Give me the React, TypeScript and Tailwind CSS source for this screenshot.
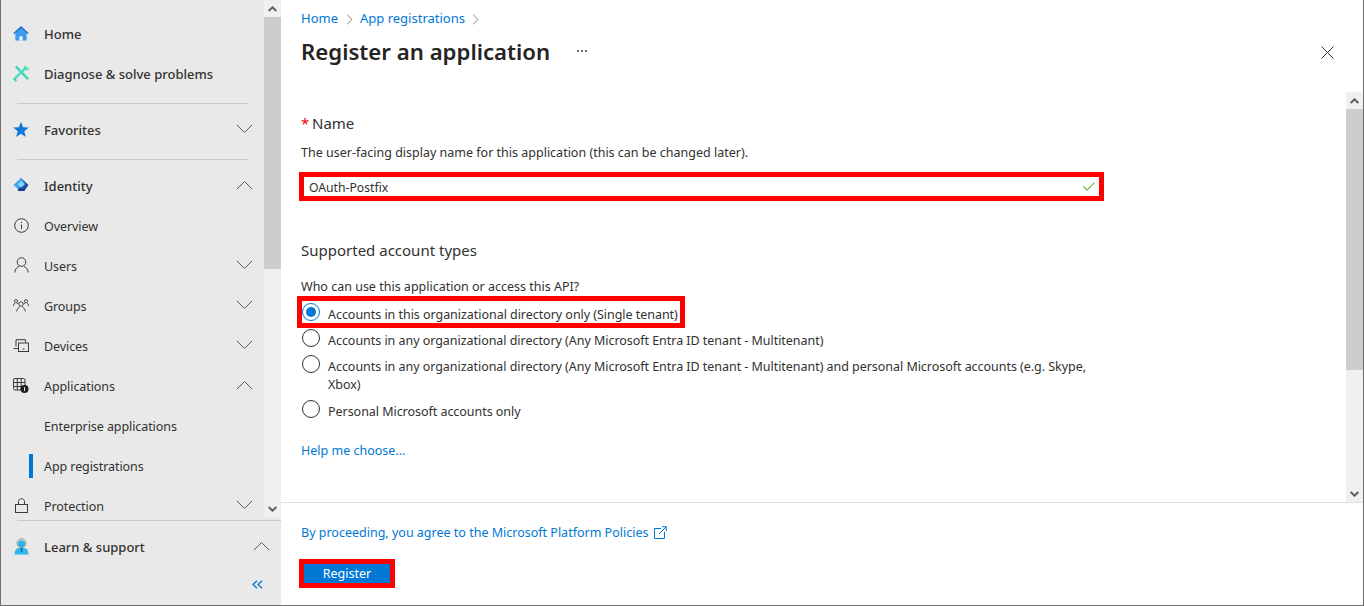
import React from "react";

const ChevronDown = ({ className = "" }: { className?: string }) => (
  <svg width="17" height="10" viewBox="0 0 17 10" fill="none" stroke="#5a5a5a" strokeWidth="1" className={className}>
    <path d="M0.8 0.8 L8.5 8.5 L16.2 0.8" />
  </svg>
);
const ChevronUp = ({ className = "" }: { className?: string }) => (
  <svg width="17" height="10" viewBox="0 0 17 10" fill="none" stroke="#5a5a5a" strokeWidth="1" className={className}>
    <path d="M0.8 9.2 L8.5 1.5 L16.2 9.2" />
  </svg>
);

const ScrollArrow = ({ up }: { up?: boolean }) => (
  <svg width="9" height="6" viewBox="0 0 9 6" fill="none" stroke="#5f5f5f" strokeWidth="2">
    {up ? <path d="M0.7 5 L4.5 1.3 L8.3 5" /> : <path d="M0.7 1 L4.5 4.7 L8.3 1" />}
  </svg>
);

const Home = () => (
  <svg width="17" height="17" viewBox="0 0 17 17">
    <path d="M2.5 7.5 L8.5 2 L14.5 7.5 V16 H2.5Z" fill="#3f9bee" />
    <rect x="6.8" y="11.5" width="3.4" height="4.5" fill="#f4f8fc" />
    <path d="M8.5 0.5 L16.8 8.2 L15.6 9 L8.5 2.6 L1.4 9 L0.2 8.2Z" fill="#1d6cc4" />
  </svg>
);
const Tools = () => (
  <svg width="17" height="17" viewBox="0 0 17 17" fill="none">
    <path d="M3 1 L16 14.5" stroke="#3fd6bb" strokeWidth="2.6" />
    <path d="M14.5 1.5 L2 14" stroke="#4fdcc3" strokeWidth="2.6" />
    <path d="M12 4.5 L13 0.5 M14 5 L16.8 2.5" stroke="#4fdcc3" strokeWidth="1.8" />
    <path d="M0.5 13.5 L3.5 16.5" stroke="#3fd6bb" strokeWidth="2.4" />
  </svg>
);
const Star = () => (
  <svg width="17" height="17" viewBox="0 0 17 17">
    <path d="M8.5 0.3 L10.7 6.2 L16.8 6.4 L12 10.3 L13.7 16.4 L8.5 12.9 L3.3 16.4 L5 10.3 L0.2 6.4 L6.3 6.2Z" fill="#0f78d6" />
  </svg>
);
const Identity = () => (
  <svg width="17" height="16" viewBox="0 0 17 16">
    <path d="M8.5 0.5 L16.5 8 L12 14.5 L5 14.5Z" fill="#1c4fa5" />
    <path d="M8.5 0.5 L0.5 8 L5 12 L13 7Z" fill="#3aa6ec" />
    <path d="M8.5 3.5 L12.5 7.5 L8.5 11 L5 7.5Z" fill="#7fd6f8" />
    <path d="M5 12 L13 12 L12 14.5 L7 14.5Z" fill="#163f8c" />
  </svg>
);
const Info = () => (
  <svg width="15" height="15" viewBox="0 0 15 15" fill="none" stroke="#3a3a3a" strokeWidth="1">
    <circle cx="7.5" cy="7.5" r="6.8" />
    <path d="M7.5 6.5 V11 M7.5 3.8 V5" />
  </svg>
);
const User = () => (
  <svg width="15" height="16" viewBox="0 0 15 16" fill="none" stroke="#3a3a3a" strokeWidth="1">
    <circle cx="7.5" cy="5" r="4.3" />
    <path d="M0.7 15.5 C1 11.5 4 9.6 5 9.4 M14.3 15.5 C14 11.5 11 9.6 10 9.4" />
  </svg>
);
const Groups = () => (
  <svg width="16" height="13" viewBox="0 0 16 13" fill="none" stroke="#3a3a3a" strokeWidth="0.9">
    <circle cx="8" cy="5" r="2.2" />
    <path d="M3.6 12.5 C4.2 9.4 6 8 7 7.6 M12.4 12.5 C11.8 9.4 10 8 9 7.6" />
    <circle cx="3" cy="2.2" r="1.6" />
    <circle cx="13" cy="2.2" r="1.6" />
    <path d="M0.3 7 C0.6 5.4 1.3 4.5 2 4 M4.2 4 L5.2 5 M15.7 7 C15.4 5.4 14.7 4.5 14 4 M11.8 4 L10.8 5" />
  </svg>
);
const Devices = () => (
  <svg width="16" height="13" viewBox="0 0 16 13" fill="none" stroke="#3a3a3a" strokeWidth="1">
    <path d="M3 7.5 V0.7 H12.5 V3.5" />
    <path d="M0.5 9.5 H5" />
    <rect x="5.5" y="4" width="10" height="8.5" />
    <path d="M9.5 10 H11.5" />
  </svg>
);
const Apps = () => (
  <svg width="16" height="15" viewBox="0 0 16 15" fill="none">
    <rect x="0.5" y="0.5" width="11.5" height="11.5" rx="1.5" stroke="#3a3a3a" />
    <path d="M0.5 4.5 H12 M0.5 8.5 H12 M4.3 0.5 V12 M8.2 0.5 V12" stroke="#3a3a3a" />
    <circle cx="11.5" cy="11" r="4" fill="#1f1f1f" />
    <path d="M11.5 9.2 V13" stroke="#e9e9e9" strokeWidth="1" />
  </svg>
);
const Lock = () => (
  <svg width="13" height="15" viewBox="0 0 13 15" fill="none" stroke="#3a3a3a" strokeWidth="1">
    <rect x="0.5" y="6.5" width="12" height="8" />
    <path d="M3.5 6.5 V3.6 C3.5 -0.3 9.5 -0.3 9.5 3.6 V6.5" />
  </svg>
);
const Support = () => (
  <svg width="15" height="17" viewBox="0 0 15 17" fill="none">
    <circle cx="7.5" cy="5.2" r="4.4" stroke="#7a7a7a" strokeWidth="0.8" />
    <circle cx="7.5" cy="5.8" r="3.5" fill="#2db4e6" />
    <path d="M0.5 16.5 C0.5 12 3 10 5 10 H10 C12 10 14.5 12 14.5 16.5Z" fill="#31b8ea" />
    <path d="M6.5 10 H8.5 L8 14 H7Z" fill="#0f5f96" />
  </svg>
);

const Row = ({
  icon,
  label,
  chevron,
  active,
  strong,
}: {
  icon?: React.ReactNode;
  label: string;
  chevron?: "up" | "down";
  active?: boolean;
  strong?: boolean;
}) => (
  <div className="flex h-10 items-center relative">
    <div className="w-[16px] h-4 ml-[12px] -mt-[2px] flex items-center justify-center shrink-0">{icon}</div>
    <span className={`ml-[15px] flex-1 pt-[2px] text-[#323130] ${strong ? "font-medium text-[13px]" : "text-[12.5px] tracking-[-0.08px]"}`}>{label}</span>
    {chevron === "down" && <ChevronDown className="mr-[11px] -mt-[2px]" />}
    {chevron === "up" && <ChevronUp className="mr-[11px] -mt-[2px]" />}
    {active && <div className="absolute left-[28px] top-[8px] w-1 h-6 bg-[#0078d4]" />}
  </div>
);

const Radio = ({ checked, children, className = "" }: { checked?: boolean; children: React.ReactNode; className?: string }) => (
  <div className={`flex items-start ${className}`}>
    <span
      className={`w-[18px] h-[18px] rounded-full border shrink-0 flex items-center justify-center ${
        checked ? "border-[#0078d4]" : "border-[#323130]"
      }`}
    >
      {checked && <span className="w-[10px] h-[10px] rounded-full bg-[#0078d4]" />}
    </span>
    <span className="ml-[8px] mt-[3px] text-[12.5px] tracking-[-0.04px] leading-[18px] text-[#323130]">{children}</span>
  </div>
);

export default function App() {
  return (
    <div className="w-[1364px] h-[606px] flex overflow-hidden bg-white border-l border-r border-b border-[#6d6d6d] [font-family:'Noto_Sans','Open_Sans',sans-serif]">
      <aside className="w-[280px] shrink-0 bg-[#e9e9e9] flex flex-col h-full">
        <div className="flex h-[517px] shrink-0">
          <nav className="w-[263px] shrink-0 overflow-hidden pt-[14px]">
            <Row icon={<Home />} label="Home" strong />
            <Row icon={<Tools />} label="Diagnose & solve problems" strong />
            <div className="h-px bg-[#c8c8c8] ml-[16px] mr-[16px] mt-[9px] mb-[6px]" />
            <Row icon={<Star />} label="Favorites" chevron="down" strong />
            <div className="h-px bg-[#c8c8c8] ml-[16px] mr-[16px] mt-[9px] mb-[6px]" />
            <Row icon={<Identity />} label="Identity" chevron="up" strong />
            <Row icon={<Info />} label="Overview" />
            <Row icon={<User />} label="Users" chevron="down" />
            <Row icon={<Groups />} label="Groups" chevron="down" />
            <Row icon={<Devices />} label="Devices" chevron="down" />
            <Row icon={<Apps />} label="Applications" chevron="up" />
            <Row label="Enterprise applications" />
            <Row label="App registrations" active />
            <Row icon={<Lock />} label="Protection" chevron="down" />
          </nav>
          <div className="w-[17px] shrink-0 bg-[#f0f0f0] flex flex-col">
            <div className="h-[17px] flex items-center justify-center"><ScrollArrow up /></div>
            <div className="h-[252px] bg-[#cdcdcd]" />
            <div className="flex-1" />
            <div className="h-[17px] flex items-center justify-center"><ScrollArrow /></div>
          </div>
        </div>
        <div className="h-px bg-[#c8c8c8] ml-[16px] mt-[3px]" />
        <div className="flex h-[52px] items-center">
          <div className="w-[16px] h-4 ml-[12px] flex items-center justify-center shrink-0 -mt-[2px]"><Support /></div>
          <span className="ml-[15px] pt-[2px] flex-1 text-[13px] font-medium text-[#323130]">Learn &amp; support</span>
          <ChevronUp className="mr-[11px] -mt-[2px]" />
        </div>
        <div className="flex justify-end pr-[18px] mt-[7px]">
          <svg width="11" height="9" viewBox="0 0 11 9" fill="none" stroke="#0078d4" strokeWidth="1.3">
            <path d="M5 0.7 L1 4.5 L5 8.3 M10 0.7 L6 4.5 L10 8.3" />
          </svg>
        </div>
      </aside>

      <main className="flex-1 flex flex-col h-full min-w-0">
        <div className="h-[92px] shrink-0 pl-[20px]">
          <div className="flex items-center h-[18px] pt-[10px] box-content text-[13px] text-[#0078d4]">
            <span>Home</span>
            <svg width="7" height="11" viewBox="0 0 7 11" fill="none" stroke="#8a8a8a" className="ml-[8px] mr-[7px]"><path d="M1 0.7 L6 5.5 L1 10.3" /></svg>
            <span>App registrations</span>
            <svg width="7" height="11" viewBox="0 0 7 11" fill="none" stroke="#8a8a8a" className="mx-[7px]"><path d="M1 0.7 L6 5.5 L1 10.3" /></svg>
          </div>
          <div className="flex items-center mt-[6px] h-[36px]">
            <h1 className="text-[22.2px] font-semibold leading-[36px] text-[#252423]">Register an application</h1>
            <span className="ml-[27px] flex gap-[2px] mt-[-3px]">
              <span className="w-[2px] h-[2px] bg-[#6a6a6a]" />
              <span className="w-[2px] h-[2px] bg-[#6a6a6a]" />
              <span className="w-[2px] h-[2px] bg-[#6a6a6a]" />
            </span>
            <svg width="13" height="13" viewBox="0 0 13 13" fill="none" stroke="#323130" strokeWidth="1" className="ml-auto mr-[29px]">
              <path d="M0.5 0.5 L12.5 12.5 M12.5 0.5 L0.5 12.5" />
            </svg>
          </div>
        </div>

        <div className="h-[410px] shrink-0 flex">
          <div className="flex-1 min-w-0 pl-[20px] overflow-hidden">
            <div className="mt-[21px] h-[20px] flex items-center text-[15px] text-[#323130] leading-[20px]">
              <span className="text-[#e00] mr-[2px] w-[9px]">*</span>Name
            </div>
            <p className="mt-[11px] text-[12.5px] leading-[18px] text-[#323130]">
              The user-facing display name for this application (this can be changed later).
            </p>
            <div className="mt-[10px] -ml-[2px] w-[805px] h-[29px] border-[5px] border-[#ff0000] flex items-center justify-between pl-[5px] pr-[4px]">
              <span className="pt-[3px] text-[12.2px] text-[#323130]">OAuth-Postfix</span>
              <svg width="12" height="9" viewBox="0 0 12 9" fill="none" stroke="#6bb33a" strokeWidth="1.1">
                <path d="M0.5 4.5 L4 8.2 L11.5 0.6" />
              </svg>
            </div>
            <div className="mt-[39px] text-[15px] leading-[20px] text-[#323130]">Supported account types</div>
            <p className="mt-[18px] text-[12.5px] leading-[18px] text-[#323130]">Who can use this application or access this API?</p>
            <div className="-ml-[4px] w-[388px] h-[32px] border-[5px] border-[#ff0000] flex items-start pt-[2px] whitespace-nowrap">
              <Radio checked>Accounts in this organizational directory only (Single tenant)</Radio>
            </div>
            <Radio className="mt-[1px] ml-px w-[790px]">Accounts in any organizational directory (Any Microsoft Entra ID tenant - Multitenant)</Radio>
            <Radio className="mt-[5px] ml-px w-[790px]">
              Accounts in any organizational directory (Any Microsoft Entra ID tenant - Multitenant) and personal Microsoft accounts (e.g. Skype, Xbox)
            </Radio>
            <Radio className="mt-[6px] ml-px w-[790px]">Personal Microsoft accounts only</Radio>
            <div className="mt-[21px] text-[12.5px] leading-[18px] text-[#0078d4]">Help me choose...</div>
          </div>
          <div className="w-[17px] shrink-0 bg-[#f0f0f0] flex flex-col">
            <div className="h-[17px] flex items-center justify-center"><ScrollArrow up /></div>
            <div className="h-[261px] bg-[#cdcdcd]" />
            <div className="flex-1" />
            <div className="h-[17px] flex items-center justify-center"><ScrollArrow /></div>
          </div>
        </div>

        <div className="flex-1 border-t border-[#e0e0e0] pl-[20px]">
          <div className="mt-[21px] flex items-center text-[12.5px] leading-[18px] text-[#0078d4]">
            <span>By proceeding, you agree to the Microsoft Platform Policies</span>
            <svg width="13" height="13" viewBox="0 0 13 13" fill="none" stroke="#0078d4" strokeWidth="1" className="ml-[6px] -mt-px">
              <path d="M7 2.5 H0.5 V12.5 H10.5 V6 M5 8 L12 1 M8 0.7 H12.3 V5" />
            </svg>
          </div>
          <div className="mt-[17px] -ml-[2px] w-[96px] h-[29px] border-[5px] border-[#ff0000] bg-[#0078d4] text-white text-[12.5px] pt-[2px] flex items-center justify-center">
            Register
          </div>
        </div>
      </main>
    </div>
  );
}
